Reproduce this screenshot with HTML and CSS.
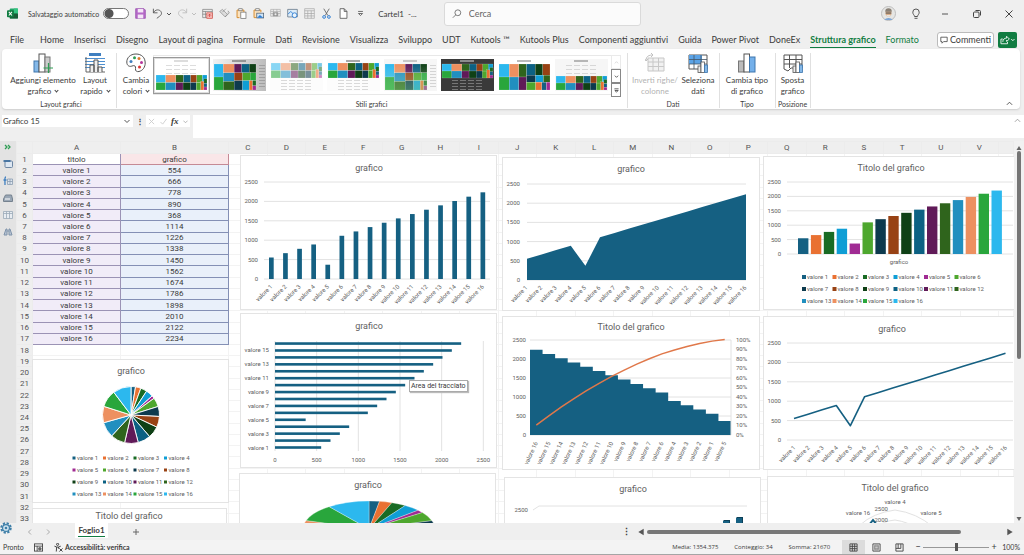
FILE: index.html
```html
<!DOCTYPE html>
<html lang="it">
<head>
<meta charset="utf-8">
<title>Cartel1 - Excel</title>
<link rel="stylesheet" href="styles.css">
</head>
<body>
<header class="titlebar">
  <svg class="logo" viewBox="0 0 12 12"><rect x="3" y="0.5" width="9" height="11" rx="1" fill="#21a366"/><rect x="7.5" y="0.500" width="4.500" height="5.500" fill="#33c481"/><rect x="3" y="6" width="9" height="5.500" rx="1" fill="#185c37"/><rect x="0" y="2.500" width="7.500" height="7.500" rx="1" fill="#107c41"/><path d="M2 4.200l3.400 4M5.400 4.200l-3.400 4" stroke="#fff" stroke-width="1.100"/></svg>
  <label class="autosave">Salvataggio automatico <input type="checkbox" role="switch"></label>
  <div class="quick">
    <button aria-label="Salva"><svg viewBox="0 0 16 16"><path d="M1 1h12l2 2v12H1z" fill="#b66bc9" stroke="#8f3fa6"/><rect x="4" y="1.500" width="8" height="5" fill="#f4e6f7"/><rect x="4" y="9.500" width="8" height="5.500" fill="#f4e6f7"/></svg></button>
    <button class="wide" aria-label="Annulla"><svg viewBox="0 0 16 16"><path d="M2 1v6h6M2 7c3-5 7-5 10-3 3 3 2 6-1 8l-4 3" fill="none" stroke="#555" stroke-width="1.300"/></svg><svg class="caret" viewBox="0 0 6 6"><path d="M1 2l2 2 2-2" fill="none" stroke="#555"/></svg></button>
    <button class="wide off" aria-label="Ripeti"><svg viewBox="0 0 16 16"><path d="M14 1v6H8M14 7c-3-5-7-5-10-3-3 3-2 6 1 8l4 3" fill="none" stroke="#777" stroke-width="1.300"/></svg><svg class="caret" viewBox="0 0 6 6"><path d="M1 2l2 2 2-2" fill="none" stroke="#777"/></svg></button>
    <button aria-label="Modulo"><svg viewBox="0 0 16 16"><path d="M1 2h14v12H1zM1 5h14M5 5v9M1 9h7" fill="none" stroke="#777"/><rect x="7" y="7" width="8" height="8" fill="#f5b7b3" stroke="#d9534a"/><path d="M11 13V9M9 11l2-2 2 2" fill="none" stroke="#c33"/></svg></button>
    <button aria-label="Pennello"><svg viewBox="0 0 16 16"><path d="M1 5l4-3 7 7-3 4zM5 6l5-5M9 13l6-6-2-3" fill="#ddd" stroke="#888"/></svg></button>
    <button aria-label="Incolla"><svg viewBox="0 0 16 16"><path d="M5 14H1.500V3h10v3" fill="#fbe3c0" stroke="#d68b2c" stroke-width="1.400"/><rect x="4" y="1" width="5" height="3" fill="#eee" stroke="#777"/><rect x="7" y="6" width="7.500" height="9" fill="#fff" stroke="#666"/></svg></button>
    <button aria-label="Incolla immagine"><svg viewBox="0 0 16 16"><path d="M5 14H1.500V3h10v3" fill="#fbe3c0" stroke="#d68b2c" stroke-width="1.400"/><rect x="4" y="1" width="5" height="3" fill="#eee" stroke="#777"/><rect x="5.500" y="7.500" width="10" height="7" fill="#cfe4f7" stroke="#456"/><path d="M6 14l4-4 5 4z" fill="#2b7cd3"/></svg></button>
    <button aria-label="Fotocamera"><svg viewBox="0 0 16 16"><path d="M1 2h14v10H1zM1 5h14M1 8h14M5 2v10M10 2v10" fill="none" stroke="#aaa"/><rect x="4" y="6" width="8" height="6" rx="1" fill="#999"/><circle cx="8" cy="9" r="1.500" fill="#eee"/></svg></button>
    <button aria-label="Immagine"><svg viewBox="0 0 16 16"><path d="M1 2h14v11H1z" fill="#dcecf9" stroke="#567"/><path d="M1.500 9l4-4 4 4" fill="none" stroke="#2b7cd3" stroke-width="1.300"/><circle cx="11" cy="10.500" r="3.500" fill="#eaf4fc" stroke="#2b7cd3" stroke-width="1.300"/></svg></button>
    <button aria-label="Tabella"><svg viewBox="0 0 16 16"><path d="M1 1h14v14H1zM1 4h14M1 8h14M1 11.500h14M5.500 4v11M10.500 4v11" fill="none" stroke="#a5a5a5"/></svg></button>
    <button aria-label="Taglia"><svg viewBox="0 0 16 16"><path d="M4 1l6 10M12 1L6 11" stroke="#666" stroke-width="1.300"/><circle cx="4.500" cy="13" r="2" fill="none" stroke="#2b7cd3" stroke-width="1.400"/><circle cx="11.500" cy="13" r="2" fill="none" stroke="#2b7cd3" stroke-width="1.400"/></svg></button>
    <button aria-label="Nuovo"><svg viewBox="0 0 16 16"><path d="M3 1h6l4 4v10H3zM9 1v4h4" fill="#fff" stroke="#555" stroke-width="1.200"/></svg></button>
    <button aria-label="Personalizza"><svg viewBox="0 0 16 16"><path d="M4.500 5h7M5 8l3 3 3-3z" fill="none" stroke="#555" stroke-width="1.200"/></svg></button>
  </div>
  <span class="docname">Cartel1 &nbsp;-...</span>
  <label class="search"><svg viewBox="0 0 12 12"><circle cx="7" cy="4.500" r="3.500" fill="none" stroke="#666"/><path d="M4.500 7L1 10.500" stroke="#666"/></svg><input type="text" placeholder="Cerca" aria-label="Cerca"></label>
  <div class="window">
    <svg class="avatar" viewBox="0 0 16 16"><circle cx="8" cy="8" r="7.500" fill="#e6e6e4" stroke="#bbb"/><path d="M3.500 15a5 4 0 0 1 9 0z" fill="#7fa6d6"/><ellipse cx="8" cy="7.500" rx="3.200" ry="4" fill="#d9b08c"/><path d="M4.500 6a3.500 3.500 0 0 1 7 0z" fill="#8a8177"/><path d="M5 7.500h6" stroke="#444"/><path d="M5.500 9.500c1 2.500 4 2.500 5 0z" fill="#e8e4e0"/></svg>
    <button aria-label="Suggerimenti"><svg viewBox="0 0 12 12"><path d="M4.500 8.500C4.500 7 2.800 6.500 2.800 4.200a3.200 3.200 0 0 1 6.400 0C9.200 6.500 7.500 7 7.500 8.500zM4.500 10.300h3" fill="none" stroke="#555"/></svg></button>
    <button aria-label="Riduci"><svg viewBox="0 0 12 12"><path d="M3 6h6" stroke="#555"/></svg></button>
    <button aria-label="Ripristina"><svg viewBox="0 0 12 12"><rect x="2.500" y="4" width="5.500" height="5.500" rx="1" fill="none" stroke="#444"/><path d="M4.500 2.500h4a1 1 0 0 1 1 1v4" fill="none" stroke="#444"/></svg></button>
    <button aria-label="Chiudi"><svg viewBox="0 0 12 12"><path d="M2.500 2.500l7 7M9.500 2.500l-7 7" stroke="#444"/></svg></button>
  </div>
</header>

<nav class="tabs">
  <a class="first" href="#">File</a><a href="#">Home</a><a href="#">Inserisci</a><a href="#">Disegno</a><a href="#">Layout di pagina</a><a href="#">Formule</a><a href="#">Dati</a><a href="#">Revisione</a><a href="#">Visualizza</a><a href="#">Sviluppo</a><a href="#">UDT</a><a href="#">Kutools ™</a><a href="#">Kutools Plus</a><a href="#">Componenti aggiuntivi</a><a href="#">Guida</a><a href="#">Power Pivot</a><a href="#">DoneEx</a><a class="active" href="#">Struttura grafico</a><a class="green" href="#">Formato</a>
  <button class="comments"><svg viewBox="0 0 10 10"><path d="M1 1.500h8v5.500H4.500L2.500 9V7H1z" fill="none" stroke="#444"/></svg>Commenti</button>
  <button class="share" aria-label="Condividi"><svg viewBox="0 0 16 10"><path d="M3 4H1v5h7V7M3 7c0-3 2-4 4-4V1l3 3-3 2.500V5" fill="none" stroke="#fff" stroke-width="0.900"/><path d="M12 4l1.700 1.700L15.400 4" fill="none" stroke="#fff"/></svg></button>
</nav>

<section class="ribbon">
  <div class="group">
    <div class="tools">
      <button class="tool w72"><svg viewBox="0 0 20 20"><rect x="1" y="8" width="5" height="11" fill="#84b8e8" stroke="#3e76ad"/><rect x="6" y="1" width="6" height="18" fill="#fff" stroke="#555"/><rect x="12" y="4" width="5" height="15" fill="#ccc" stroke="#777"/><path d="M15.500 10v10M10.500 15h10" stroke="#2f9e55" stroke-width="1.200"/></svg><span>Aggiungi elemento<br>grafico <i></i></span></button>
      <button class="tool w36"><svg viewBox="0 0 20 20"><rect x="4" y="0" width="12" height="3" fill="#3f7fc0"/><path d="M0 5.500h20M0 8.500h20M0 11.500h20M0 14.500h20" stroke="#4d8fd0"/><path d="M1 4v15h19" fill="none" stroke="#666"/><path d="M5 19v-7h4v7M9 19V7h4v12M13 19v-5h4v5" fill="#eee" stroke="#555"/></svg><span>Layout<br>rapido <i></i></span></button>
    </div>
    <h2>Layout grafici</h2>
  </div>
  <div class="group styles">
    <div class="tools">
      <button class="tool w34"><svg viewBox="0 0 20 20"><path d="M10 1C4 1 .8 5 .8 9c0 4 3 5 5.200 4 2.500-1 4 0 3.500 2.500-.5 2.500 1.500 3.500 3.500 3 4-1 6.200-4.500 6.200-8.500C19.200 4.500 15.500 1 10 1z" fill="#fff" stroke="#555"/><circle cx="5" cy="8.500" r="1.500" fill="#3f7fc0"/><circle cx="8.500" cy="4.800" r="1.500" fill="#2f9e55"/><circle cx="13" cy="5.500" r="1.500" fill="#e07b2c"/><circle cx="15.500" cy="9.500" r="1.500" fill="#b5359c"/><circle cx="13.500" cy="14" r="1.500" fill="#d33"/></svg><span>Cambia<br>colori <i></i></span></button>
      <div class="gallery" id="gallery"></div>
      <div class="spin">
        <button class="off" aria-label="Su"><svg viewBox="0 0 6 6"><path d="M1 4l2-2 2 2" fill="none" stroke="#999"/></svg></button>
        <button aria-label="Giù"><svg viewBox="0 0 6 6"><path d="M1 2l2 2 2-2" fill="none" stroke="#444"/></svg></button>
        <button aria-label="Altro"><svg viewBox="0 0 6 6"><path d="M.5 1h5M1 3l2 2 2-2z" fill="none" stroke="#444"/></svg></button>
      </div>
    </div>
    <h2>Stili grafici</h2>
  </div>
  <div class="group">
    <div class="tools">
      <button class="tool w50 off"><svg viewBox="0 0 20 20"><path d="M3 5h16v13H3zM3 9h16M3 13.500h16M8 5v13M13.500 5v13" fill="#ddd" stroke="#777"/><path d="M1 8c0-5 3-6 7-6M6 0l2 2-2 2M0 6l1 2 2-2" fill="none" stroke="#666"/></svg><span>Inverti righe/<br>colonne</span></button>
      <button class="tool w36"><svg viewBox="0 0 20 20"><path d="M1 2h18v14H1z" fill="#fff" stroke="#555"/><path d="M1 2h13v9H1z" fill="#5ba3e6"/><path d="M1 6.500h18M1 11h18M6 2v14M13 2v14" stroke="#456" stroke-width="0.800"/><rect x="10" y="13" width="3" height="6.500" fill="#eee" stroke="#555" stroke-width="0.800"/><rect x="13" y="9" width="3.500" height="10.500" fill="#fff" stroke="#555" stroke-width="0.800"/><rect x="16.500" y="12" width="3" height="7.500" fill="#84b8e8" stroke="#3e76ad" stroke-width="0.800"/></svg><span>Seleziona<br>dati</span></button>
    </div>
    <h2>Dati</h2>
  </div>
  <div class="group">
    <div class="tools">
      <button class="tool w50"><svg viewBox="0 0 20 20"><rect x="1.500" y="8" width="5.500" height="11" fill="#bbb" stroke="#777"/><rect x="7" y="1" width="5.500" height="18" fill="#fff" stroke="#555"/><rect x="12.500" y="4" width="5.500" height="15" fill="#74b0ea" stroke="#3e76ad"/></svg><span>Cambia tipo<br>di grafico</span></button>
    </div>
    <h2>Tipo</h2>
  </div>
  <div class="group">
    <div class="tools">
      <button class="tool w28"><svg viewBox="0 0 20 20"><path d="M1 2h18v13H8l-3 3-4-2zM1 6.500h18M1 11h18M6.500 2v13M13 2v13" fill="#fff" stroke="#555"/><rect x="10" y="13" width="3" height="6.500" fill="#eee" stroke="#555" stroke-width="0.800"/><rect x="13" y="9" width="3.500" height="10.500" fill="#fff" stroke="#555" stroke-width="0.800"/><rect x="16.500" y="12" width="3" height="7.500" fill="#84b8e8" stroke="#3e76ad" stroke-width="0.800"/></svg><span>Sposta<br>grafico</span></button>
    </div>
    <h2>Posizione</h2>
  </div>
  <button class="collapse" aria-label="Comprimi"><svg viewBox="0 0 8 8"><path d="M1 5.500l3-3 3 3" fill="none" stroke="#444"/></svg></button>
</section>

<section class="formula">
  <div class="namebox"><input type="text" value="Grafico 15" aria-label="Casella nome"><svg viewBox="0 0 6 6"><path d="M.5 2L3 4.500 5.500 2" fill="none" stroke="#555"/></svg></div>
  <span class="dots">⋮</span>
  <div class="fx"><svg viewBox="0 0 8 8"><path d="M1 1l6 6M7 1L1 7" stroke="#ccc"/></svg><svg viewBox="0 0 8 8"><path d="M.5 4.500L3 7l4.500-6" fill="none" stroke="#ccc"/></svg><em>fx</em><svg class="small" viewBox="0 0 6 6"><path d="M.5 2L3 4.500 5.500 2" fill="none" stroke="#aaa"/></svg></div>
  <div class="entry"><input type="text" aria-label="Formula"><svg viewBox="0 0 8 8"><path d="M1 5.500l3-3 3 3" fill="none" stroke="#999"/></svg></div>
</section>

<main class="work">
  <aside class="rail">
    <svg viewBox="0 0 10 10"><path d="M2 3L4 5 2 7M5 3L7 5 5 7" fill="none" stroke="#2f9e55" stroke-width="1.300"/></svg>
    <svg viewBox="0 0 10 10"><rect x="2" y="2" width="7.500" height="6.500" rx="1" fill="#dde7f2" stroke="#6d86a3"/><path d="M.5 2h7" stroke="#3f6f9f" stroke-width="1.800"/></svg>
    <svg viewBox="0 0 10 10"><path d="M3 1C1.500 1 2 3 2 9M.5 4h3" fill="none" stroke="#3f7fc0" stroke-width="1.300"/><path d="M4.500 3h5v5.500h-5zM4.500 5.500h5M7 3v5.500" fill="#dde5ee" stroke="#8c9db0" stroke-width="0.800"/></svg>
    <svg viewBox="0 0 10 10"><path d="M.5 6l2-4h6l1 4v2.500h-9z" fill="#9aa7b5" stroke="#75828f"/><path d="M2 6h5" stroke="#fff"/></svg>
    <svg viewBox="0 0 10 10"><path d="M.5 1.500h9v7h-9zM3.500 1.500v7M6.500 1.500v7M.5 3.500h9" fill="#e8edf2" stroke="#9aa9b8" stroke-width="0.800"/></svg>
    <svg viewBox="0 0 10 10"><path d="M1 8l2-6h1v6zM9 8L7 2H6v6zM4 4h2" fill="#b7c4d3" stroke="#7f93aa"/></svg>
    <svg class="gear" viewBox="0 0 14 14"><circle cx="7" cy="7" r="5.500" fill="none" stroke="#3f7fa8" stroke-width="2.400" stroke-dasharray="2.600 1.720"/><circle cx="7" cy="7" r="4" fill="#cfe3ef" stroke="#3f7fa8" stroke-width="1.400"/><circle cx="7" cy="7" r="1.500" fill="#3f7fa8"/></svg>
  </aside>
  <div class="sheet">
    <table class="grid" id="grid"></table>
    <div class="canvas" id="canvas"></div>
  </div>
  <div class="vscroll"><svg viewBox="0 0 6 6"><path d="M3 1l2.500 4h-5z" fill="#666"/></svg><div class="track"><b></b></div><svg viewBox="0 0 6 6"><path d="M3 5L.5 1h5z" fill="#666"/></svg></div>
</main>

<footer class="sheets">
  <button aria-label="Precedente"><svg viewBox="0 0 8 8"><path d="M5 1.500L2.500 4 5 6.500" fill="none" stroke="#aaa"/></svg></button>
  <button aria-label="Successivo"><svg viewBox="0 0 8 8"><path d="M3 1.500L5.500 4 3 6.500" fill="none" stroke="#aaa"/></svg></button>
  <button class="tab"><span>Foglio1</span></button>
  <button aria-label="Nuovo foglio"><svg viewBox="0 0 8 8"><path d="M4 1v6M1 4h6" stroke="#666"/></svg></button>
  <span class="sep">⋮</span>
  <div class="hscroll"><svg viewBox="0 0 6 6"><path d="M1 3l4-2.500v5z" fill="#555"/></svg><div class="track"><b></b></div><svg viewBox="0 0 6 6"><path d="M5 3L1 .5v5z" fill="#555"/></svg></div>
</footer>
<footer class="status">
  <span class="ready">Pronto</span>
  <svg viewBox="0 0 10 10"><rect x=".5" y="1" width="9" height="8" fill="#fff" stroke="#444"/><path d="M.5 3.500h9M3.500 3.500V9" stroke="#444"/><circle cx="6.500" cy="6.500" r="2" fill="#666"/></svg>
  <span class="access"><svg viewBox="0 0 10 10"><circle cx="4" cy="1.500" r="1.200" fill="none" stroke="#333"/><path d="M.5 3.500l2.500 1-.5 5M7.500 3.500L5 4.500l.3 2M3 4.500h2M6 6l3.500 3.500M9.500 6L6 9.500" fill="none" stroke="#333"/></svg>Accessibilità: verifica</span>
  <div class="stats"><span>Media: 1354.375</span><span>Conteggio: 34</span><span>Somma: 21670</span></div>
  <div class="views">
    <button class="on" aria-label="Normale"><svg viewBox="0 0 10 10"><path d="M1 1h8v8H1zM1 3.700h8M1 6.300h8M3.700 1v8M6.300 1v8" fill="none" stroke="#444"/></svg></button>
    <button aria-label="Layout di pagina"><svg viewBox="0 0 10 10"><path d="M1 1h8v8H1z" fill="none" stroke="#444"/><path d="M3 2.500h4v5H3zM3 4.200h4M3 5.900h4" fill="none" stroke="#555" stroke-width="0.700"/></svg></button>
    <button aria-label="Interruzioni"><svg viewBox="0 0 10 10"><path d="M1 1h8v8H1zM3.500 1v5M1 6h5.500V1" fill="none" stroke="#444"/></svg></button>
  </div>
  <div class="zoom"><button aria-label="Zoom indietro">−</button><input type="range" aria-label="Zoom" value="50"><button aria-label="Zoom avanti">+</button></div>
  <span class="pct">100%</span>
</footer>
<script src="charts.js"></script>
</body>
</html>
```
FILE: styles.css
```css
* { box-sizing: border-box; }
body {
  margin: 0;
  height: 100vh;
  display: flex;
  flex-direction: column;
  overflow: hidden;
  background: #efefef;
  color: #3b3b3b;
  font: 9px/12px Lato, "Open Sans", sans-serif;
}
button, input { font: inherit; color: inherit; }
button { border: 0; background: none; padding: 0; display: flex; align-items: center; justify-content: center; }
svg { display: block; flex: none; }
.off { opacity: .4; }

/* title bar */
.titlebar { display: flex; align-items: center; height: 27px; padding: 0 9px 0 7px; flex: none; }
.logo { width: 11px; height: 11px; }
.autosave { display: flex; align-items: center; gap: 4px; margin-left: 10px; font-size: 7px; white-space: nowrap; }
.autosave input { appearance: none; width: 26px; height: 11px; margin: 0; border: 1px solid #777; border-radius: 6px; background: radial-gradient(circle at 5px 50%, #555 4px, #fff 5px); }
.quick { display: flex; align-items: center; gap: 6px; margin-left: 6px; }
.quick button { width: 11px; }
.quick button.wide { width: 19px; gap: 3px; justify-content: flex-start; }
.quick svg { width: 11px; height: 11px; }
.quick .caret { width: 6px; height: 6px; }
.docname { margin-left: 12px; font-size: 8px; white-space: nowrap; }
.search { display: flex; align-items: center; gap: 7px; width: 197px; height: 24px; margin-left: 27px; padding-left: 7px; background: #fbfbfb; border: 1px solid #dadada; border-radius: 3px; }
.search svg { width: 10px; height: 10px; }
.search input { border: 0; background: none; padding: 0; min-width: 0; outline: 0; }
.search input::placeholder { color: #666; }
.window { display: flex; align-items: center; gap: 20px; margin-left: auto; }
.window svg { width: 12px; height: 12px; }
.window .avatar { width: 15px; height: 15px; }
.window .avatar + button { margin-right: -3px; margin-left: -6px; }

/* ribbon tabs */
.tabs { display: flex; align-items: center; gap: 10px; height: 22px; padding: 3px 7px 0 10px; flex: none; white-space: nowrap; }
.tabs a { color: inherit; text-decoration: none; line-height: 14px; }
.tabs .first { margin-right: 6px; }
.tabs .active { color: #107c41; font-weight: bold; box-shadow: 0 1px #107c41; }
.tabs .green { color: #107c41; }
.comments { gap: 2px; height: 16px; margin-left: auto; padding: 0 2px; background: #fff; border: 1px solid #bbb; border-radius: 3px; }
.comments svg { width: 8px; height: 8px; }
.share { width: 19px; height: 16px; margin-left: -6px; background: #107c41; border-radius: 2px; flex: none; }
.share svg { width: 15px; height: 10px; }

/* ribbon */
.ribbon { display: flex; height: 60px; margin: 0 4px 0 2px; padding: 4px 0 1px 5px; flex: none; background: #fff; border-radius: 4px; box-shadow: 0 1px 2px #ccc; }
.group { display: flex; flex-direction: column; justify-content: space-between; padding: 0 3px 0 2px; border-right: 1px solid #e0e0e0; }
.group h2 { margin: 0; font-size: 7px; line-height: 8px; font-weight: normal; text-align: center; }
.tools { display: flex; justify-content: center; }
.tool { flex-direction: column; justify-content: flex-start; gap: 2px; line-height: 11px; font-size: 8px; white-space: nowrap; }
.tool svg { width: 20px; height: 20px; }
.tool i { display: inline-block; width: 3px; height: 3px; margin: 0 0 2px 2px; border: solid #444; border-width: 0 1px 1px 0; transform: rotate(45deg); }
.w72 { width: 68px; }
.w50 { width: 50px; }
.w36 { width: 36px; }
.w34 { width: 34px; }
.w28 { width: 28px; }
.styles { width: 511px; flex: none; }
.gallery { display: flex; gap: 4px; height: 40px; margin-top: 2px; align-items: center; border: 1px solid #e8e8e8; border-right: 0; flex: 1; }
.gallery button { width: 53px; height: 32px; flex: none; }
.gallery button.sel { width: 55px; height: 35px; outline: 1px solid #999; border: 1px solid #ddd; }
.gallery svg { width: 53px; height: 32px; }
.spin { display: flex; flex-direction: column; width: 10px; margin: 2px 3px 0 0; }
.spin button { flex: 1; border: 1px solid #888; }
.spin .off { border-color: #ccc; }
.spin svg { width: 5px; height: 5px; }
.collapse { margin: auto 7px 1px auto; }
.collapse svg { width: 7px; height: 7px; }

/* formula bar */
.formula { display: flex; align-items: flex-start; height: 32px; padding: 6px 0 0 2px; flex: none; font-size: 8px; }
.namebox { display: flex; align-items: center; width: 131px; height: 12px; padding-right: 3px; background: #fff; }
.namebox input { flex: 1; min-width: 0; border: 0; padding: 0 1px; outline: 0; background: none; }
.namebox svg { width: 6px; height: 6px; }
.dots { width: 13px; text-align: center; font-weight: bold; }
.fx { display: flex; align-items: center; justify-content: space-around; width: 44px; height: 12px; background: #fff; }
.fx svg { width: 7px; height: 7px; }
.fx .small { width: 5px; }
.fx em { font: italic bold 9px/12px "Liberation Serif", serif; }
.entry { display: flex; flex: 1; height: 23px; margin-left: 3px; padding: 2px 3px; background: #fff; }
.entry input { flex: 1; border: 0; outline: 0; padding: 0; background: none; }
.entry svg { width: 7px; height: 7px; }

/* worksheet */
.work { display: flex; flex: 1; min-height: 0; font-family: Roboto, sans-serif; }
.rail { position: relative; display: flex; flex-direction: column; align-items: center; gap: 7px; width: 16px; padding-top: 1px; background: #e3e3e3; flex: none; }
.rail svg { width: 10px; height: 10px; }
.rail .gear { position: absolute; left: 0; bottom: -12px; width: 12px; height: 14px; }
.sheet { position: relative; flex: 1; min-width: 0; overflow: hidden; background: #fff; }
.grid { width: 100%; height: calc(100% + 2px); border-collapse: collapse; table-layout: fixed; font-size: 8px; line-height: 9px; }
.grid th, .grid td { padding: 0; border: 1px solid #f3f3f3; text-align: center; font-weight: normal; overflow: hidden; white-space: nowrap; }
.grid th { background: #efefef; border-color: #ececec; color: #555; }
.grid thead th { height: 12px; }
.grid .c-head { width: 16px; }
.grid .c-a { width: 88px; }
.grid .c-b { width: 108px; }
.grid .c-last { width: 15px; }
.grid td.title { border-color: #9b93b5; }
.grid td.key { background: #f1ecf8; border-color: #9b93b5; }
.grid td.series { background: #f9e6e8; border-color: #c58a95; }
.grid td.value { background: #e9f0fa; border-color: #8490b5; }
.canvas { position: absolute; inset: 12px 0 0 16px; overflow: hidden; }
.chart { position: absolute; margin: 0; background: #fff; border: 1px solid #e4e4e4; }
.chart svg { width: 100%; height: 100%; overflow: hidden; }
.chart text { font: 6px Roboto, sans-serif; fill: #606060; }
.chart text.heading { font-size: 9px; }
.chart .rule { stroke: #e2e2e2; fill: none; }
.columns { left: 208px; top: 2px; width: 257px; height: 155px; }
.area { left: 470px; top: 4px; width: 258px; height: 154px; }
.colors { left: 731px; top: 3px; width: 256px; height: 154px; }
.bars { left: 208px; top: 160px; width: 257px; height: 155px; }
.pareto { left: 470px; top: 163px; width: 258px; height: 154px; }
.line { left: 731px; top: 163px; width: 256px; height: 154px; }
.pie { left: 0; top: 206px; width: 197px; height: 144px; }
.blank { left: 0; top: 355px; width: 195px; height: 144px; }
.pie3d { left: 207px; top: 320px; width: 257px; height: 154px; }
.col3d { left: 472px; top: 324px; width: 257px; height: 154px; }
.radar { left: 735px; top: 323px; width: 256px; height: 154px; }
.tip { position: absolute; left: 377px; top: 227px; padding: 0 1px; background: #fff; border: 1px solid #aaa; box-shadow: 1px 1px 1px #bbb; font-size: 7px; line-height: 10px; white-space: nowrap; }
.vscroll { display: flex; flex-direction: column; align-items: center; width: 10px; padding: 4px 0 1px; background: #f1f1f1; flex: none; }
.vscroll svg, .hscroll svg { width: 6px; height: 6px; }
.track { flex: 1; }
.vscroll .track b { display: block; width: 4px; height: 57%; border-radius: 2px; background: #757575; }

/* sheet tabs and status bar */
.sheets { display: flex; align-items: center; height: 17px; padding-left: 21px; flex: none; }
.sheets > button { width: 18px; }
.sheets svg { width: 8px; height: 8px; }
.sheets .tab { width: 33px; height: 15px; margin: 0 19px 2px 18px; background: #fff; font-size: 8px; font-weight: bold; }
.tab span { border-bottom: 1px solid #107c41; line-height: 11px; }
.sep { margin-left: auto; width: 12px; text-align: center; font-weight: bold; }
.hscroll { display: flex; align-items: center; gap: 2px; width: 38%; padding: 0 10px 0 4px; flex: 0 0 auto; }
.sheets .hscroll { width: 39%; }
.hscroll .track b { display: block; width: 88%; height: 4px; border-radius: 2px; background: #757575; }
.status { display: flex; align-items: center; height: 15px; padding: 0 4px 0 3px; border-bottom: 1px solid #a5a5a5; background: #f3f3f3; flex: none; font-size: 7px; white-space: nowrap; }
.status > svg, .access svg { width: 9px; height: 9px; }
.ready { width: 31px; }
.access { display: flex; align-items: center; gap: 2px; margin: 0 auto 0 11px; font-weight: bold; }
.stats { display: flex; gap: 16px; margin-right: 12px; font: 6px/12px "Open Sans", sans-serif; }
.views { display: flex; align-self: stretch; }
.views button { width: 23px; }
.views .on { background: #dcdcdc; }
.views svg { width: 9px; height: 9px; }
.zoom { display: flex; align-items: center; gap: 1px; margin-left: 3px; font-size: 9px; }
.zoom button { width: 8px; }
.zoom input { appearance: none; width: 66px; height: 10px; margin: 0; background: linear-gradient(#999, #999) center / 100% 1px no-repeat; }
.zoom input::-webkit-slider-thumb { appearance: none; width: 3px; height: 8px; background: #555; }
.pct { margin-left: 4px; }
```
FILE: charts.js
```js
const values = [554, 666, 778, 890, 368, 1114, 1226, 1338, 1450, 1562, 1674, 1786, 1898, 2010, 2122, 2234];
const names = values.map((v, i) => 'valore ' + (i + 1));
const palette = ['#156082', '#e97132', '#196b24', '#0f9ed5', '#a02b93', '#4ea72e', '#0d3a4e', '#984214',
  '#0f4016', '#0c6183', '#601a58', '#2f641c', '#218fbf', '#ed9060', '#29a63c', '#2cb8ee'];
const main = palette[0];

const text = (x, y, s, anchor = 'middle', extra = '') => `<text x="${x}" y="${y}" text-anchor="${anchor}" ${extra}>${s}</text>`;
const rect = (x, y, w, h, fill) => `<rect x="${x}" y="${y}" width="${w}" height="${h}" fill="${fill}"/>`;
const heading = (x, y, s) => text(x, y, s, 'middle', 'class="heading"');
const rule = d => `<path class="rule" d="${d}"/>`;

/* worksheet cells */
const letters = 'ABCDEFGHIJKLMNOPQRSTUV'.split('').concat('');
let html = '<colgroup><col class="c-head"><col class="c-a"><col class="c-b">' + '<col>'.repeat(20) + '<col class="c-last"></colgroup><thead><tr><th></th>';
html += letters.map(l => `<th>${l}</th>`).join('') + '</tr></thead><tbody>';
for (let r = 1; r <= 33; r++) {
  html += `<tr><th>${r}</th>`;
  if (r === 1) html += '<td class="title">titolo</td><td class="series">grafico</td>';
  else if (r <= 17) html += `<td class="key">${names[r - 2]}</td><td class="value">${values[r - 2]}</td>`;
  else html += '<td></td><td></td>';
  html += '<td></td>'.repeat(21) + '</tr>';
}
document.getElementById('grid').innerHTML = html + '</tbody>';

/* value axis with horizontal rules */
function axis(x1, x2, y0, top, labelX) {
  let s = '';
  for (let v = 0; v <= 2500; v += 500) {
    const y = y0 - (y0 - top) * v / 2500;
    s += rule(`M${x1} ${y}H${x2}`) + text(labelX, y + 2, v, 'end');
  }
  return s;
}
const slanted = (list, x0, step, y, angle) => list.map((n, i) => {
  const x = x0 + step * i;
  return text(x, y, n, 'end', `transform="rotate(${angle} ${x} ${y})"`);
}).join('');

function legend(x, y, perRow, size) {
  return names.map((n, i) => {
    const lx = x + 30.5 * (i % perRow), ly = y + 12 * Math.floor(i / perRow);
    return rect(lx - size / 2, ly - size / 2, size, size, palette[i]) + text(lx + 3, ly + 2, n, 'start');
  }).join('');
}

function slices(cx, cy, rx, ry, stroke) {
  const total = values.reduce((a, b) => a + b);
  let a = 0, s = '';
  values.forEach((v, i) => {
    const b = a + v / total * 2 * Math.PI;
    const p = t => `${cx + rx * Math.sin(t)} ${cy - ry * Math.cos(t)}`;
    s += `<path d="M${cx} ${cy}L${p(a)}A${rx} ${ry} 0 0 1 ${p(b)}Z" fill="${palette[i]}" stroke="#fff" stroke-width="${stroke}"/>`;
    a = b;
  });
  return s;
}

function columns() {
  const h = v => v * 97 / 2500;
  return heading(128, 15, 'grafico') + axis(23, 249, 123, 26, 17) +
    values.map((v, i) => rect(28 + 14.1 * i, 123 - h(v), 4.7, h(v), main)).join('') + slanted(names, 32, 14.1, 131, -45);
}
function area() {
  const pts = values.map((v, i) => `${24 + 14.6 * i} ${122 - v * 96 / 2500}`).join('L');
  return heading(128, 14, 'grafico') + axis(24, 243, 122, 26, 17) +
    `<path d="M24 122L${pts}V122Z" fill="${main}"/>` + slanted(names, 25, 14.6, 130, -45);
}
function colors() {
  const h = v => v * 71 / 2500;
  return heading(127, 14, 'Titolo del grafico') + axis(23, 249, 97, 25, 17) +
    values.map((v, i) => rect(34 + 12.9 * i, 97 - h(v), 10.4, h(v), palette[i])).join('') +
    text(135, 107, 'grafico') + legend(40, 120, 6, 4);
}
function bars() {
  let s = heading(128, 15, 'grafico');
  for (let v = 0; v <= 2500; v += 500) s += rule(`M${34 + v / 12} 27V137`) + text(34 + v / 12, 148, v);
  values.forEach((v, i) => {
    const y = 133.500 - 6.93 * i;
    s += rect(34, y - 1.3, v / 12, 2.6, main);
    if (i % 2 === 0) s += text(28, y + 2, names[i], 'end');
  });
  return s;
}
function pareto() {
  const order = values.map((v, i) => [v, names[i]]).sort((a, b) => b[0] - a[0]);
  const total = values.reduce((a, b) => a + b);
  const step = 201 / 16;
  let sum = 0, s = heading(128, 13, 'Titolo del grafico') + axis(27, 228, 118, 23, 23);
  const edge = order.map(([v], i) => `V${118 - v * 95.500 / 2500}H${27 + step * (i + 1)}`).join('');
  s += `<path d="M27 118${edge}V118Z" fill="${main}"/>`;
  const pts = order.map(([v], i) => { sum += v; return `${27 + step * (i + .5)} ${118 - 95.500 * sum / total}`; });
  s += rule('M228 23V118') + `<path d="M${pts.join('L')}" fill="none" stroke="#e0784a" stroke-width="1.500"/>`;
  for (let p = 0; p <= 10; p++) s += text(233, 120 - 9.55 * p, p * 10 + '%', 'start');
  return s + slanted(order.map(o => o[1]), 35, step, 126, -65);
}
function line() {
  const pts = values.map((v, i) => `${30 + 14.1 * i} ${123 - v * 97 / 2500}`).join('L');
  return heading(128, 15, 'grafico') + axis(23, 249, 123, 26, 17) +
    `<path d="M${pts}" fill="none" stroke="${main}" stroke-width="1.600" stroke-linejoin="round"/>` + slanted(names, 32, 14.1, 131, -45);
}
const pie = () => heading(98, 14, 'grafico') + slices(98, 55, 28.5, 28.5, .9) + legend(41, 98, 4, 3);
const blank = () => heading(96, 10, 'Titolo del grafico');
const pie3d = () => heading(128, 14, 'grafico') + slices(129, 55, 66, 28, .3);
function col3d() {
  return heading(128, 14, 'grafico') + text(23, 34, '2500', 'end') + rule('M28 32L34 28H242') +
    rect(218, 43, 6, 20, main) + rect(231, 40, 6, 20, main) +
    `<path d="M218 43l1-1h6v20h-1V43zM231 40l1-1h6v20h-1V40z" fill="#0c3f57"/>`;
}
function radar() {
  return heading(127, 14, 'Titolo del grafico') + rule('M92 48Q105 36 127 33Q149 36 165 50M108 50Q116 44 127 43Q140 45 148 51') +
    text(127, 27, 'valore 4') + text(90, 38, 'valore 16') + text(163, 38, 'valore 5') +
    text(120, 34, '2500', 'end') + text(120, 45, '2000', 'end') +
    `<path d="M101 48l4-5 4 5" fill="none" stroke="${main}" stroke-width="2"/>`;
}

const charts = { columns, area, colors, bars, pareto, line, pie, blank, pie3d, col3d, radar };
document.getElementById('canvas').innerHTML = Object.keys(charts)
  .map(k => `<figure class="chart ${k}"><svg>${charts[k]()}</svg></figure>`).join('') + '<div class="tip">Area del tracciato</div>';

/* style gallery: treemap tiles as [colour, x, y, width, height] in percent */
const wide = [[16, 0, 0, 19, 50], [15, 0, 50, 19, 50], [14, 19, 0, 20, 50], [13, 19, 50, 20, 50], [12, 39, 0, 15, 50], [11, 39, 50, 14, 50],
  [10, 54, 0, 14, 50], [9, 53, 50, 14, 50], [8, 68, 0, 12, 50], [7, 67, 50, 12, 50], [6, 79, 50, 9, 50], [6, 80, 0, 11, 50],
  [4, 91, 0, 9, 50], [2, 88, 42, 6, 58], [3, 94, 25, 6, 30], [1, 94, 55, 6, 25], [5, 94, 80, 6, 20]];
const tall = [[16, 0, 0, 22, 50], [15, 0, 50, 22, 50], [14, 22, 0, 26, 34], [13, 22, 34, 26, 33], [12, 22, 67, 26, 33], [11, 48, 0, 18, 34],
  [8, 48, 34, 20, 30], [7, 48, 64, 20, 36], [10, 66, 0, 18, 34], [9, 84, 0, 16, 34], [6, 68, 34, 18, 30], [15, 86, 34, 14, 30],
  [4, 68, 64, 16, 36], [2, 84, 64, 8, 36], [3, 92, 64, 8, 20], [5, 92, 84, 8, 16]];
const big = [[16, 0, 0, 20, 50], [15, 0, 50, 20, 50], [14, 20, 0, 19, 50], [13, 20, 50, 19, 50], [12, 39, 0, 15, 50], [11, 39, 50, 15, 50],
  [10, 54, 0, 17, 43], [7, 54, 43, 18, 27], [6, 54, 70, 18, 30], [9, 71, 0, 15, 43], [8, 86, 0, 14, 43], [4, 72, 43, 15, 27],
  [12, 87, 43, 13, 27], [2, 72, 70, 12, 30], [1, 84, 70, 9, 30], [5, 93, 70, 7, 30]];
const tiles = (list, x, y, w, h, o = 1) => `<g opacity="${o}" stroke="#fff" stroke-width=".15">` +
  list.map(t => `<rect x="${x + t[1] * w / 100}" y="${y + t[2] * h / 100}" width="${t[3] * w / 100}" height="${t[4] * h / 100}" fill="${palette[t[0] - 1]}"/>`).join('') + '</g>';
function lines(x, y, c, cols, rows, stepY) {
  let s = '';
  for (let r = 0; r < rows; r++) for (let k = 0; k < cols; k++) s += rect(x + k * 8, y + r * stepY, 6, .8, c);
  return s;
}
const bar = c => rect(19, 1.500, 14, 1, c);
const thumbs = [
  rect(0, 0, 53, 32, '#fff') + bar('#bbb') + lines(11, 6, '#d5d5d5', 4, 3, 4) + tiles(wide, 1, 16, 51, 15),
  rect(0, 0, 53, 32, 'url(#silver)') + bar('#555') + tiles(tall, 1, 5, 42, 26) + lines(46, 6, '#999', 1, 8, 3),
  rect(0, 0, 53, 32, '#fcfcfc') + bar('#bbb') + tiles(wide, 1, 4, 51, 15, .55) + lines(11, 21, '#d0d0d0', 4, 4, 3),
  rect(0, 0, 53, 32, '#fcfcfc') + bar('#555') + tiles(wide, 1, 4, 51, 15) + lines(11, 21, '#d0d0d0', 4, 4, 3),
  rect(0, 0, 53, 32, '#f6f6f6') + bar('#999') + tiles(tall, 1, 5, 42, 26) + rect(1, 5, 42, 26, 'url(#shine)') + lines(46, 6, '#ccc', 1, 8, 3),
  rect(0, 0, 53, 32, '#3a3a3a') + bar('#ddd') + tiles(wide, 1, 5, 51, 14) + lines(11, 21, '#888', 4, 4, 3),
  rect(0, 0, 53, 32, '#fff') + bar('#777') + tiles(big, 1, 5, 51, 26),
  rect(0, 0, 53, 32, '#f6f6f6') + bar('#777') + lines(11, 6, '#d0d0d0', 4, 3, 4) + tiles(wide, 1, 17, 51, 14)
];
const defs = '<defs><linearGradient id="silver"><stop offset="0" stop-color="#f2f2f2"/><stop offset="1" stop-color="#bdbdbd"/></linearGradient>' +
  '<linearGradient id="shine" x2="0" y2="1"><stop offset="0" stop-color="#fff" stop-opacity="0"/><stop offset="1" stop-color="#8fe08f" stop-opacity=".4"/></linearGradient></defs>';
document.getElementById('gallery').innerHTML = thumbs
  .map((t, i) => `<button class="${i ? '' : 'sel'}" aria-label="Stile ${i + 1}"><svg viewBox="0 0 53 32">${i ? '' : defs}${t}</svg></button>`).join('');
```
